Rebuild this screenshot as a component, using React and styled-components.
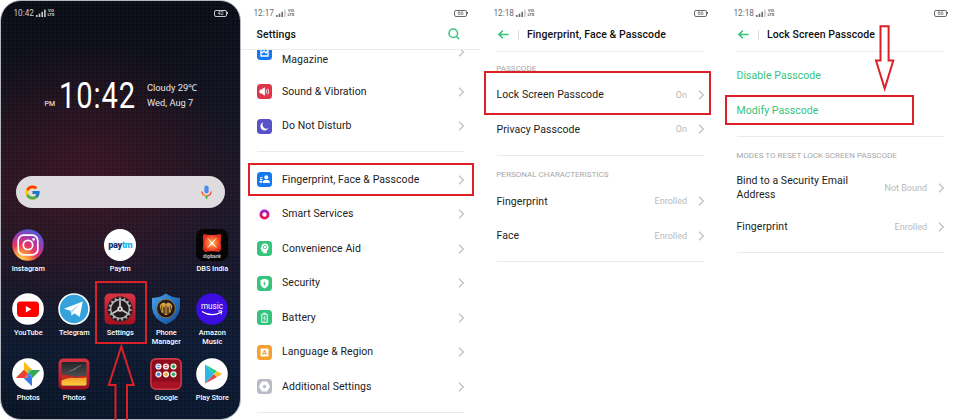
import React from 'react'
import styled, { createGlobalStyle } from 'styled-components'
import { FcGoogle } from 'react-icons/fc'

const GlobalStyle = createGlobalStyle`
      * {
            box-sizing: border-box;
      }
      body {
            margin: 0;
            background: #fff;
            font-family: Roboto, "Liberation Sans", sans-serif;
      }
      svg {
            display: block;
      }
`

const red = '#dc2027'
const green = '#35c47c'

/* ---------- status bar ---------- */

const StatusBar = ({ time, level, light, signal = 3 }) => (
      <StatusWrapper $light={light}>
            <Time>{time}</Time>
            <svg width="10" height="8" viewBox="0 0 10 8" fill="currentColor">
                  <rect x="0" y="6" width="1.6" height="2" />
                  <rect x="2.7" y="4.6" width="1.6" height="3.4" />
                  <rect x="5.4" y="2.8" width="1.6" height="5.2" />
                  <rect x="8.1" y="0.6" width="1.6" height="7.4" opacity={signal > 3 ? 1 : 0.4} />
            </svg>
            <Volte>
                  <span>VO</span>
                  <span>LTE</span>
            </Volte>
            <Battery>{level}</Battery>
      </StatusWrapper>
)

const StatusWrapper = styled.div`
      display: flex;
      align-items: center;
      height: 12px;
      margin-top: ${props => (props.$light ? '6px' : '7px')};
      padding: 0 13px 0 ${props => (props.$light ? '12.5px' : '13.5px')};
      color: ${props => (props.$light ? '#c9cbd0' : '#6b6b6b')};
`

const Time = styled.span`
      width: 22.5px;
      font-size: 8.2px;
      line-height: 12px;
      white-space: nowrap;
`

const Volte = styled.span`
      display: flex;
      flex-direction: column;
      align-items: center;
      width: 8px;
      margin-left: 1px;
      font-size: 4.4px;
      font-weight: 700;
      line-height: 4px;
`

const Battery = styled.span`
      position: relative;
      width: 13px;
      height: 7px;
      margin-left: auto;
      border: 0.8px solid currentColor;
      border-radius: 2px;
      font-size: 5.4px;
      font-weight: 500;
      line-height: 5.6px;
      text-align: center;

      &::after {
            content: '';
            position: absolute;
            top: 1.5px;
            right: -2px;
            width: 1px;
            height: 2px;
            background: currentColor;
      }
`

/* ---------- home screen icons ---------- */

const Instagram = () => (
      <svg width="32" height="32" viewBox="0 0 32 32">
            <defs>
                  <radialGradient id="insta" cx="0.25" cy="1.02" r="1.05">
                        <stop offset="0.05" stopColor="#ffd55e" />
                        <stop offset="0.3" stopColor="#fb8b3c" />
                        <stop offset="0.5" stopColor="#e8385d" />
                        <stop offset="0.72" stopColor="#b733a5" />
                        <stop offset="1" stopColor="#4f5bd5" />
                  </radialGradient>
            </defs>
            <circle cx="16" cy="16" r="15.8" fill="url(#insta)" />
            <g fill="none" stroke="#fff" strokeWidth="1.7">
                  <rect x="6.2" y="6.2" width="19.6" height="19.6" rx="5.4" />
                  <circle cx="16" cy="16" r="4.7" />
            </g>
            <circle cx="21.6" cy="10.4" r="1.3" fill="#fff" />
      </svg>
)

const Digibank = () => (
      <svg width="32" height="32" viewBox="0 0 32 32">
            <defs>
                  <radialGradient id="digi">
                        <stop offset="0" stopColor="#ffb04a" />
                        <stop offset="0.6" stopColor="#f4642c" />
                        <stop offset="1" stopColor="#df2a22" />
                  </radialGradient>
            </defs>
            <rect width="32" height="32" rx="7.5" fill="#050505" />
            <path d="M7.5 5 Q16 7 24.5 5 L25.3 8 Q24 14 25.3 20 L23 23 Q16 21.5 9 23 L6.8 20 Q8 14 6.8 8z" fill="url(#digi)" />
            <path d="M11 8.5 L16 13 L21 8.5 L17.1 14 L21.3 19.6 L16 15.2 L11 19.6 L15 14z" fill="#fff" />
            <text x="16" y="28.8" textAnchor="middle" fontSize="4.7" fontWeight="500" fill="#ddd">digibank</text>
      </svg>
)

const YouTube = () => (
      <svg width="32" height="32" viewBox="0 0 32 32">
            <circle cx="16" cy="16" r="15.8" fill="#fff" />
            <rect x="5" y="8.5" width="22" height="15.4" rx="3.6" fill="#f00" />
            <path d="M13.8 13 L19.4 16.2 L13.8 19.4z" fill="#fff" />
      </svg>
)

const Telegram = () => (
      <svg width="32" height="32" viewBox="0 0 32 32">
            <circle cx="16" cy="16" r="15.8" fill="#fff" />
            <circle cx="16" cy="16" r="14.2" fill="#35a2dc" />
            <path d="M6 15.8 L24.8 8.6 L21.6 24 L16.4 20.2 L13.6 22.8 L12.5 17.8z" fill="#fff" />
            <path d="M12.5 17.8 L21.8 11.3 L14.6 18.9 L13.6 22.8z" fill="#b9d9ec" />
      </svg>
)

const teeth = [0, 24, 48, 72, 96, 120, 144, 168, 192, 216, 240, 264, 288, 312, 336]

const SettingsApp = () => (
      <svg width="32" height="32" viewBox="0 0 32 32">
            <defs>
                  <linearGradient id="redTile" x1="0" y1="0" x2="0" y2="1">
                        <stop offset="0" stopColor="#d83343" />
                        <stop offset="1" stopColor="#a3101f" />
                  </linearGradient>
            </defs>
            <rect x="0.5" y="0.5" width="31" height="31" rx="5" fill="url(#redTile)" />
            <circle cx="16" cy="16" r="12.6" fill="#231a1e" />
            <circle cx="16" cy="16" r="9.4" fill="none" stroke="#b4b4b8" strokeWidth="1.5" />
            {teeth.map(a => (
                  <rect key={a} x="15.1" y="4.3" width="1.8" height="2.4" fill="#b4b4b8" transform={`rotate(${a} 16 16)`} />
            ))}
            {[0, 120, 240].map(a => (
                  <path key={a} d="M15.1 7.5h1.8v8h-1.8z" fill="#c6c6ca" transform={`rotate(${a} 16 16)`} />
            ))}
            <circle cx="16" cy="16" r="2.7" fill="#d5d5d8" />
            <circle cx="16" cy="16" r="1" fill="#333" />
      </svg>
)

const PhoneManager = () => (
      <svg width="32" height="32" viewBox="0 0 32 32">
            <defs>
                  <linearGradient id="shield" x1="0" y1="0" x2="1" y2="1">
                        <stop offset="0" stopColor="#51a5e6" />
                        <stop offset="0.5" stopColor="#2473c6" />
                        <stop offset="1" stopColor="#174a91" />
                  </linearGradient>
            </defs>
            <path d="M16 0.5 Q21 4.5 30 5 V15 Q29 26 16 31.5 Q3 26 2 15 V5 Q11 4.5 16 0.5z" fill="url(#shield)" />
            <circle cx="16" cy="15.6" r="9.3" fill="#211a18" stroke="#a87b35" strokeWidth="0.8" />
            <path d="M9.6 13 Q11 9.5 14.4 9.5 L16 11 L17.6 9.5 Q21 9.5 22.4 13 L20.7 19 L18.6 20.8 V14 H17.4 V22 H14.6 V14 H13.4 V20.8 L11.3 19z" fill="#d79f42" />
            <path d="M11.7 12.5v5M20.3 12.5v5M16 12v9" stroke="#3a2613" strokeWidth="0.8" />
      </svg>
)

const AmazonMusic = () => (
      <svg width="32" height="32" viewBox="0 0 32 32">
            <circle cx="16" cy="16" r="15.8" fill="#3b0de0" />
            <text x="16" y="15.8" textAnchor="middle" fontSize="8.2" fontWeight="400" fill="#fff">music</text>
            <path d="M6 18.4 Q15.5 24.5 25 19.2" fill="none" stroke="#fff" strokeWidth="1.2" />
            <path d="M22.2 18 L26 17.9 L25.2 21.4" fill="none" stroke="#fff" strokeWidth="1" />
      </svg>
)

const blades = [
      [0, '#fbbc16', '#f08c1d'],
      [90, '#34a853', '#6cc486'],
      [180, '#3b78e7', '#5a94f3'],
      [270, '#ea4335', '#f0705c'],
]

const GooglePhotos = () => (
      <svg width="32" height="32" viewBox="0 0 32 32">
            <circle cx="16" cy="16" r="15.8" fill="#fff" />
            {blades.map(([angle, color, shade]) => (
                  <g key={angle} transform={`rotate(${angle} 16 16)`}>
                        <path d="M12 3.8 L20.2 11.8 L16 16 H12z" fill={color} />
                        <path d="M12 11.8 L16 16 H12z" fill={shade} />
                  </g>
            ))}
      </svg>
)

const Gallery = () => (
      <svg width="32" height="32" viewBox="0 0 32 32">
            <defs>
                  <linearGradient id="sky" x1="0" y1="0" x2="0" y2="1">
                        <stop offset="0" stopColor="#252629" />
                        <stop offset="1" stopColor="#66676b" />
                  </linearGradient>
                  <linearGradient id="sand" x1="0" y1="0" x2="0" y2="1">
                        <stop offset="0" stopColor="#f39a28" />
                        <stop offset="1" stopColor="#fbd03e" />
                  </linearGradient>
            </defs>
            <rect x="0.5" y="0.5" width="31" height="31" rx="5" fill="url(#redTile)" />
            <rect x="3.5" y="4" width="25" height="23.5" rx="1.5" fill="url(#sky)" />
            <path d="M3.5 16.6 Q11 17 17 19 Q22 17.6 28.5 17.4 V22 H3.5z" fill="#c8281b" />
            <path d="M3.5 22.4 Q9 19.6 16 19.9 T28.5 19.4 V26 a1.5 1.5 0 0 1 -1.5 1.5 H5 a1.5 1.5 0 0 1 -1.5 -1.5z" fill="url(#sand)" />
            <path d="M11 13.6 L18 10.6 M16 11 L23 7.4" stroke="#8f9094" strokeWidth="0.7" />
      </svg>
)

const folderDots = [
      [8.5, 8.5, '#4285f4'], [16, 8.5, '#e94b3d'], [23.5, 8.5, '#2f9c59'],
      [8.5, 16.3, '#3f7fe0'], [16, 16.3, '#f3a51c'], [23.5, 16.3, '#26a96c'],
]

const GoogleFolder = () => (
      <svg width="32" height="32" viewBox="0 0 32 32">
            <rect x="0.9" y="0.9" width="30.2" height="30.2" rx="5" fill="#8d0c1b" stroke="#cc3a48" strokeWidth="1.6" />
            <path d="M2.5 23.5h27v3a3.5 3.5 0 0 1 -3.5 3.5h-20a3.5 3.5 0 0 1 -3.5 -3.5z" fill="#a81425" />
            {folderDots.map(([x, y, color]) => (
                  <g key={color}>
                        <circle cx={x} cy={y} r="3.1" fill="#f1ecec" />
                        <circle cx={x} cy={y} r="1.7" fill={color} />
                  </g>
            ))}
            <path d="M6.8 8.5h3.4M14.3 8.5h3.4" stroke="#fff" strokeWidth="0.8" />
      </svg>
)

const PlayStore = () => (
      <svg width="32" height="32" viewBox="0 0 32 32">
            <circle cx="16" cy="16" r="15.8" fill="#fff" />
            <path d="M9 6.4 L18 16 L9 25.6z" fill="#2bb8e6" />
            <path d="M9 6.4 L20.8 13 L18 16z" fill="#1fd08b" />
            <path d="M9 25.6 L20.8 19.2 L18 16z" fill="#ea4350" />
            <path d="M20.8 13 L26.2 16 L20.8 19.2 L18 16z" fill="#fbbf2d" />
      </svg>
)

const Mic = () => (
      <svg width="11" height="15" viewBox="0 0 11 15">
            <rect x="3.4" y="0.4" width="4.2" height="8.2" rx="2.1" fill="#4a8af4" />
            <path d="M1 6.4 a4.5 4.5 0 0 0 1.4 3.3" fill="none" stroke="#e9573f" strokeWidth="1.4" />
            <path d="M10 6.4 a4.5 4.5 0 0 1 -7.6 3.3" fill="none" stroke="#e9573f" strokeWidth="1.4" />
            <path d="M2.4 9.7 a4.5 4.5 0 0 0 3.1 1.2" fill="none" stroke="#f6b51e" strokeWidth="1.4" />
            <path d="M5.5 11 v3" stroke="#35a853" strokeWidth="1.5" />
      </svg>
)

const apps = [
      { name: 'Instagram', icon: <Instagram /> },
      null,
      { name: 'Paytm', paytm: true },
      null,
      { name: 'DBS India', icon: <Digibank /> },
      { name: 'YouTube', icon: <YouTube /> },
      { name: 'Telegram', icon: <Telegram /> },
      { name: 'Settings', icon: <SettingsApp /> },
      { name: 'Phone Manager', icon: <PhoneManager /> },
      { name: 'Amazon Music', icon: <AmazonMusic /> },
      { name: 'Photos', icon: <GooglePhotos /> },
      { name: 'Photos', icon: <Gallery /> },
      null,
      { name: 'Google', icon: <GoogleFolder /> },
      { name: 'Play Store', icon: <PlayStore /> },
]

const HomeScreen = () => (
      <HomeWrapper>
            <StatusBar time="10:42" level="42" light signal={4} />
            <ClockRow>
                  <Meridiem>PM</Meridiem>
                  <Clock><span>10:42</span></Clock>
                  <Weather>
                        <span>Cloudy 29℃</span>
                        <span>Wed, Aug 7</span>
                  </Weather>
            </ClockRow>
            <SearchBar>
                  <FcGoogle size={17} />
                  <Mic />
            </SearchBar>
            <AppGrid>
                  {apps.map((app, i) => (
                        <AppCell key={i}>
                              {app && app.icon}
                              {app && app.paytm && <Paytm>pay<b>tm</b></Paytm>}
                              {app && <AppName>{app.name}</AppName>}
                        </AppCell>
                  ))}
            </AppGrid>
      </HomeWrapper>
)

const HomeWrapper = styled.section`
      position: relative;
      z-index: 1;
      width: 241px;
      height: 420px;
      margin-right: -1px;
      overflow: hidden;
      border: 1px solid #b4b7c0;
      border-radius: 21px;
      color: #fff;
      background:
            radial-gradient(circle, rgba(160, 175, 215, 0.035) 0.8px, transparent 1.5px) 0 0 / 4px 4px,
            radial-gradient(circle, rgba(0, 0, 0, 0.1) 0.8px, transparent 1.5px) 2px 2px / 4px 4px,
            radial-gradient(ellipse 150px 130px at 85px 170px, rgba(74, 22, 40, 0.65), transparent),
            linear-gradient(115deg, transparent 45%, rgba(14, 30, 62, 0.45) 100%),
            linear-gradient(#0b0d15 0%, #12121c 22%, #251621 45%, #1f1727 62%, #0e1b30 84%, #0a1526 100%);
`

const ClockRow = styled.div`
      display: flex;
      align-items: flex-end;
      height: 34px;
      margin-top: 58.5px;
      padding-left: 43.5px;
`

const Meridiem = styled.span`
      width: 14px;
      font-size: 7px;
      line-height: 8px;
      padding-bottom: 1px;
      height: 11.5px;
`

const Clock = styled.div`
      width: 77px;
      height: 34px;
      font-size: 37.5px;
      line-height: 34px;

      span {
            display: inline-block;
            letter-spacing: 1.2px;
            transform: scaleX(0.775);
            transform-origin: left;
      }
`

const Weather = styled.div`
      display: flex;
      flex-direction: column;
      margin-left: 11.5px;
      padding-bottom: 1px;
      color: #e6e6ea;
      font-size: 9.3px;
      line-height: 15.4px;
      white-space: nowrap;
`

const SearchBar = styled.div`
      display: flex;
      align-items: center;
      justify-content: space-between;
      height: 32px;
      margin: 64.5px 15px 0 15px;
      padding: 0 13px 0 8px;
      border-radius: 17px;
      background: #dfdcdf;
`

const AppGrid = styled.div`
      display: grid;
      grid-template-columns: repeat(5, 46px);
      grid-auto-rows: 64.5px;
      margin: 20.5px 0 0 4.3px;
`

const AppCell = styled.div`
      display: flex;
      flex-direction: column;
      align-items: center;
`

const AppName = styled.span`
      width: 40px;
      margin-top: 4px;
      font-size: 7.4px;
      font-weight: 500;
      line-height: 8.7px;
      text-align: center;
      letter-spacing: -0.05px;
`

const Paytm = styled.div`
      display: flex;
      align-items: center;
      justify-content: center;
      width: 32px;
      height: 32px;
      border-radius: 50%;
      background: #fff;
      color: #0d3576;
      font-size: 9.2px;
      font-weight: 900;
      letter-spacing: -0.3px;

      b {
            color: #19b4ee;
            font-weight: 900;
      }
`

/* ---------- settings list icons ---------- */

const glyphs = {
      magazine: <path d="M4 3h7v8H4zM5 8l2-2 2 2 2-3" fill="none" stroke="#fff" strokeWidth="1.3" />,
      sound: (
            <g fill="none" stroke="#fff" strokeWidth="0.9">
                  <path d="M3 6h1.6L7.4 3.8v7.4L4.6 9H3z" fill="#fff" />
                  <path d="M9 5.6q1 1.9 0 3.8M10.8 4.6q1.7 2.9 0 5.8" />
            </g>
      ),
      moon: <path d="M6.3 3.3A4.2 4.2 0 1 0 11.3 9.2 A4 4 0 0 1 6.3 3.3z" fill="#fff" />,
      people: (
            <g fill="#fff">
                  <circle cx="9.3" cy="5.3" r="2" />
                  <path d="M5.7 11q0-3.3 3.6-3.3t3.6 3.3z" />
                  <path d="M3 5.3h2.6v.9H3zM3 7h2.4v.9H3zM2.6 8.8h2.6v2H2.6z" />
            </g>
      ),
      head: (
            <g>
                  <path d="M7.8 2.5a4 4 0 0 1 3.8 4.2q0 2-1.7 3v2.6H6.2v-1.7H4.5V8.5L3.4 7.8 4.4 6Q4.6 2.5 7.8 2.5z" fill="#fff" />
                  <circle cx="7.9" cy="6.1" r="1.7" fill="none" stroke={green} strokeWidth="0.8" />
            </g>
      ),
      shield: (
            <g>
                  <path d="M7.5 2.8l4 1.3v3.5q0 3.2-4 4.8-4-1.6-4-4.8V4.1z" fill="#fff" />
                  <path d="M8 4.8L6 8h1.3L7 10.3 9 7.2H7.7z" fill={green} />
            </g>
      ),
      battery: (
            <g fill="none" stroke="#fff" strokeWidth="1">
                  <path d="M4.8 4.2h5.4v8H4.8zM6.4 3.2h2.2" />
                  <path d="M8 5.8L6.6 8.2h1.8L7.2 10.6" strokeWidth="0.8" />
            </g>
      ),
      language: (
            <g>
                  <rect x="3.5" y="3.5" width="8" height="8" rx="1" fill="#fff" />
                  <text x="7.5" y="10" textAnchor="middle" fontSize="7" fontWeight="700" fill="#f5a131">A</text>
            </g>
      ),
      gear: (
            <g>
                  <path d="M5.2 3.4h4.6l2.3 4.1L9.8 11.6H5.2L2.9 7.5z" fill="#fff" stroke="#fff" strokeWidth="1.6" strokeLinejoin="round" />
                  <circle cx="7.5" cy="7.5" r="1.7" fill="#b9bcc6" />
            </g>
      ),
      ring: (
            <g>
                  <defs>
                        <linearGradient id="ring" x1="0" y1="0" x2="0" y2="1">
                              <stop offset="0" stopColor="#a21cc4" />
                              <stop offset="1" stopColor="#ee1244" />
                        </linearGradient>
                  </defs>
                  <circle cx="7.5" cy="7.5" r="3.6" fill="none" stroke="url(#ring)" strokeWidth="2.8" />
            </g>
      ),
}

const Tile = ({ glyph, color }) => (
      <TileBox $color={color}>
            <svg width="15" height="15" viewBox="0 0 15 15">{glyphs[glyph]}</svg>
      </TileBox>
)

const TileBox = styled.span`
      width: 15px;
      height: 15px;
      margin-right: 10.5px;
      border-radius: 3.5px;
      background: ${props => props.$color};
`

const Chevron = () => (
      <svg width="7" height="10" viewBox="0 0 7 10" fill="none" stroke="#bfbfbf" strokeWidth="1.2">
            <path d="M1 0.8L5.4 5 1 9.2" />
      </svg>
)

const Back = () => (
      <svg width="11" height="9" viewBox="0 0 11 9" fill="none" stroke={green} strokeWidth="1.6">
            <path d="M4.8 0.7L1 4.5l3.8 3.8M1 4.5h9.6" />
      </svg>
)

const Row = ({ tile, color, label, value, tall, clipped, action }) => (
      <RowWrapper $tall={tall}>
            {tile && <Tile glyph={tile} color={color} />}
            <Label $clipped={clipped} $action={action}>{label}</Label>
            {value && <Value>{value}</Value>}
            {!action && <Chevron />}
      </RowWrapper>
)

const RowWrapper = styled.div`
      display: flex;
      align-items: center;
      height: ${props => (props.$tall ? '44.5px' : '34.5px')};
      padding: 0 15.5px 0 16.5px;
`

const Label = styled.span`
      flex: 1;
      padding-top: ${props => (props.$clipped ? '16px' : '0.8px')};
      color: ${props => (props.$action ? green : '#1c1c1c')};
      font-size: 10.5px;
      line-height: 14.3px;
      letter-spacing: 0.07px;
`

const Value = styled.span`
      margin-right: 10.5px;
      color: #b9b9b9;
      font-size: 9px;
      white-space: nowrap;
`

const Line = styled.hr`
      height: 1px;
      margin: 8px 16px 0 16.5px;
      border: 0;
      background: #e9e9e9;
`

const GroupTitle = styled.h2`
      height: ${props => (props.$first ? '26.2px' : '28.5px')};
      margin: 0;
      padding: ${props => (props.$first ? '11px' : '13.2px')} 0 0 16.3px;
      color: #a6a6a6;
      font-size: 8.05px;
      font-weight: 400;
      line-height: 12px;
      white-space: nowrap;
`

const SettingsScreen = () => (
      <Screen>
            <StatusBar time="12:17" level="66" />
            <TitleBar>
                  <Title>Settings</Title>
                  <svg width="12" height="12" viewBox="0 0 12 12" fill="none" stroke={green} strokeWidth="1.5">
                        <circle cx="5.3" cy="5.3" r="4.3" />
                        <path d="M8.3 8.3l3 3" />
                  </svg>
            </TitleBar>
            <Scroller>
                  <Row tile="magazine" color="#1677f2" label="Magazine" tall clipped />
                  <Row tile="sound" color="#e0344a" label="Sound & Vibration" />
                  <Row tile="moon" color="#5951c8" label="Do Not Disturb" />
                  <Line />
                  <Gap />
                  <Row tile="people" color="#1677f2" label="Fingerprint, Face & Passcode" />
                  <Row tile="ring" color="#fcfafc" label="Smart Services" />
                  <Row tile="head" color={green} label="Convenience Aid" />
                  <Row tile="shield" color={green} label="Security" />
                  <Row tile="battery" color={green} label="Battery" />
                  <Row tile="language" color="#f5a131" label="Language & Region" />
                  <Row tile="gear" color="#b9bcc6" label="Additional Settings" />
                  <Line />
            </Scroller>
      </Screen>
)

const PasscodeScreen = () => (
      <Screen>
            <StatusBar time="12:18" level="66" />
            <BackBar>
                  <Back />
                  <Separator />
                  <Title>Fingerprint, Face & Passcode</Title>
            </BackBar>
            <GroupTitle $first>PASSCODE</GroupTitle>
            <Row label="Lock Screen Passcode" value="On" />
            <Row label="Privacy Passcode" value="On" />
            <Line />
            <GroupTitle>PERSONAL CHARACTERISTICS</GroupTitle>
            <Row label="Fingerprint" value="Enrolled" />
            <Row label="Face" value="Enrolled" />
            <Line />
      </Screen>
)

const LockScreen = () => (
      <Screen>
            <StatusBar time="12:18" level="66" />
            <BackBar>
                  <Back />
                  <Separator />
                  <Title>Lock Screen Passcode</Title>
            </BackBar>
            <Actions>
                  <Row label="Disable Passcode" action />
                  <Row label="Modify Passcode" action />
            </Actions>
            <Line />
            <GroupTitle>MODES TO RESET LOCK SCREEN PASSCODE</GroupTitle>
            <Row label={<>Bind to a Security Email<br />Address</>} value="Not Bound" tall />
            <Row label="Fingerprint" value="Enrolled" />
            <Line />
      </Screen>
)

const Screen = styled.section`
      display: flex;
      flex-direction: column;
      width: 240px;
      height: 420px;
      overflow: hidden;
      background: #fff;
`

const TitleBar = styled.header`
      display: flex;
      align-items: center;
      justify-content: space-between;
      height: 31px;
      padding: 0 20px 0 16.5px;
      border-bottom: 1px solid #ebebeb;
`

const BackBar = styled.header`
      display: flex;
      align-items: center;
      height: 32.5px;
      margin: 0 16px 0 16.5px;
      padding-left: 1.5px;
      border-bottom: 1.5px solid #ececec;
`

const Separator = styled.span`
      width: 1px;
      height: 10px;
      margin: 0 8px 0 9px;
      background: #ddd;
`

const Title = styled.h1`
      margin: 0;
      padding-top: 1px;
      color: #111;
      font-size: 10.5px;
      font-weight: 500;
      line-height: 14px;
      letter-spacing: 0.08px;
      white-space: nowrap;
`

const Scroller = styled.div`
      flex: 1;
      overflow: hidden;

      > :first-child {
            margin-top: -20.2px;
      }
`

const Gap = styled.div`
      height: 10px;
`

const Actions = styled.div`
      padding-top: 7.3px;
`

/* ---------- red marks over the screens ---------- */

const Mark = styled.div`
      position: absolute;
      z-index: 2;
      left: ${props => props.$x}px;
      top: ${props => props.$y}px;
      width: ${props => props.$w}px;
      height: ${props => props.$h}px;
      border: 2px solid ${red};
`

const Arrows = styled.svg`
      position: absolute;
      z-index: 2;
      top: 0;
      left: 0;
      pointer-events: none;
`

const Page = styled.main`
      position: relative;
      display: flex;
      width: 960px;
      height: 420px;
      overflow: hidden;
`

const App = () => (
      <>
            <GlobalStyle />
            <Page>
                  <HomeScreen />
                  <SettingsScreen />
                  <PasscodeScreen />
                  <LockScreen />
                  <Mark $x={95} $y={281} $w={52} $h={63} />
                  <Mark $x={248} $y={163} $w={226} $h={33} />
                  <Mark $x={484} $y={71} $w={227} $h={44} />
                  <Mark $x={725} $y={95} $w={189} $h={30} />
                  <Arrows width="960" height="420" fill="none" stroke={red} strokeWidth="2">
                        <path d="M115.5 422V385H108.8L121.3 346.5 133.6 385H127V422" />
                        <path d="M880.5 26.3H888.6V60.5H893.3L884.7 88.5 876 60.5H880.5z" />
                  </Arrows>
            </Page>
      </>
)

export default App
